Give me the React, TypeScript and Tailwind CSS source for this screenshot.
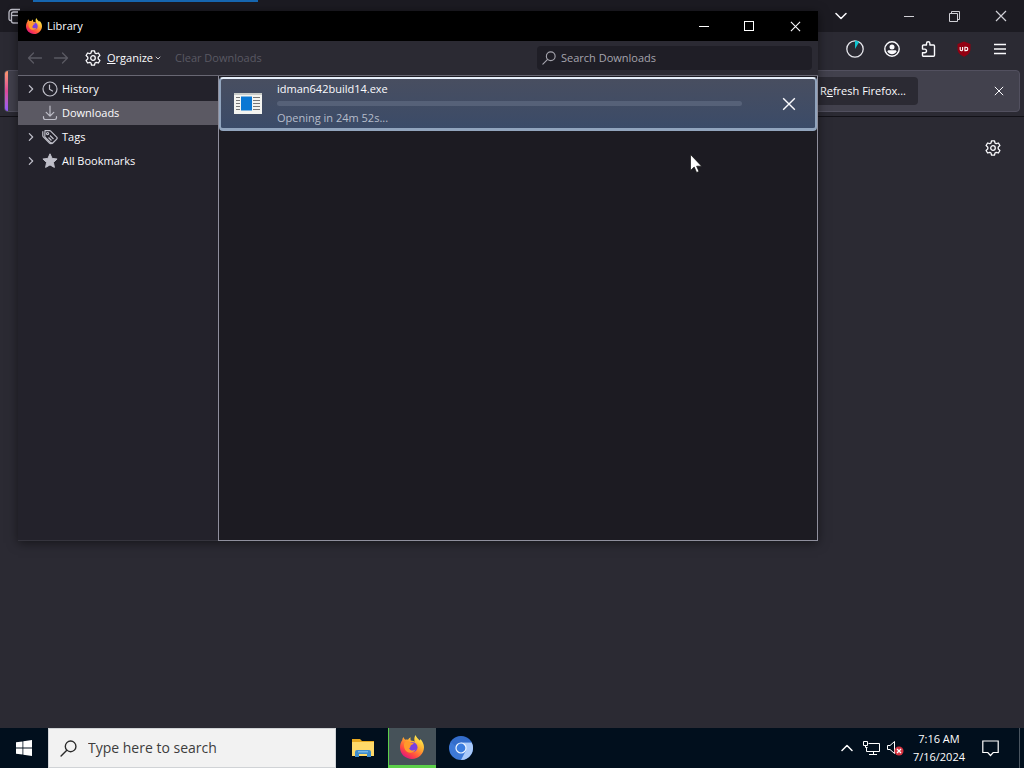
import { useState } from 'react';

const sidebarItems = [
    { label: 'History', icon: ClockIcon, expandable: true },
    { label: 'Downloads', icon: DownloadIcon, expandable: false },
    { label: 'Tags', icon: TagIcon, expandable: true },
    { label: 'All Bookmarks', icon: StarIcon, expandable: true },
];

function ClockIcon() {
    return (
        <svg viewBox="0 0 16 16" className="h-4 w-4" fill="none" stroke="currentColor" strokeLinecap="round">
            <circle cx="8" cy="8" r="7" strokeWidth="1.2" />
            <path d="M7.5 4v4.2l3 1.8" strokeWidth="1.2" />
        </svg>
    );
}

function DownloadIcon() {
    return (
        <svg viewBox="0 0 16 16" className="h-4 w-4" fill="none" stroke="currentColor" strokeWidth="1.2" strokeLinecap="round" strokeLinejoin="round">
            <path d="M8 1v10M4.2 7.4 8 11.2l3.8-3.8M1.5 11.5v1.3a1.7 1.7 0 0 0 1.7 1.7h9.6a1.7 1.7 0 0 0 1.7-1.7v-1.3" />
        </svg>
    );
}

function TagIcon() {
    return (
        <svg viewBox="0 0 16 16" className="h-4 w-4" fill="none" stroke="currentColor" strokeWidth="1.2" strokeLinejoin="round">
            <path d="M.8 2.2v4.6c0 .4.2.8.5 1.1l6.2 6.2c.6.6 1.4.6 2 0l.7-.7" />
            <path d="M3 1.6h4.6c.4 0 .8.2 1.1.5l6 6c.6.6.6 1.4 0 2l-3.9 3.9c-.6.6-1.4.6-2 0L3.3 8.5a1.5 1.5 0 0 1-.5-1.1z" />
            <circle cx="5.6" cy="4.6" r="1.1" />
            <path d="m8 6.5 3.5 3.5M6.5 8.5l3 3" />
        </svg>
    );
}

function StarIcon() {
    return (
        <svg viewBox="0 0 16 16" className="h-4 w-4" fill="currentColor" stroke="currentColor" strokeWidth="1" strokeLinejoin="round">
            <path d="m8 .8 2.1 4.6 5 .6-3.7 3.4 1 5L8 11.9l-4.4 2.5 1-5L.9 6l5-.6z" />
        </svg>
    );
}

function GearIcon() {
    return (
        <svg viewBox="0 0 16 16" className="h-4 w-4" fill="none" stroke="currentColor" strokeWidth="1.3" strokeLinejoin="round">
            <path d="M6.500.8h3l.5 2.200 1.200.7 2.200-.7 1.500 2.500-1.700 1.600v1.800l1.700 1.600-1.500 2.500-2.200-.7-1.200.7-.5 2.200h-3L6 13l-1.200-.7-2.200.7-1.500-2.500 1.700-1.600V7.100L1.100 5.500 2.600 3l2.200.7L6 3z" />
            <circle cx="8" cy="8" r="2.3" />
        </svg>
    );
}

function ArrowIcon({ back = false }: { back?: boolean }) {
    return (
        <svg viewBox="0 0 16 16" className="h-4 w-4" fill="none" stroke="currentColor" strokeWidth="1.3" strokeLinecap="round" strokeLinejoin="round">
            <path d={back ? 'M14.5 8H2M6.5 3l-5 5 5 5' : 'M1.5 8H14M9.5 3l5 5-5 5'} />
        </svg>
    );
}

function ChevronIcon({ d, className }: { d: string; className: string }) {
    return (
        <svg viewBox="0 0 12 12" className={className} fill="none" stroke="currentColor" strokeWidth="1.5" strokeLinecap="round" strokeLinejoin="round">
            <path d={d} />
        </svg>
    );
}

function CrossIcon({ className }: { className: string }) {
    return (
        <svg viewBox="0 0 12 12" className={className} fill="none" stroke="currentColor" strokeWidth="1.2">
            <path d="m1 1 10 10M11 1 1 11" />
        </svg>
    );
}

function SearchIcon({ className }: { className: string }) {
    return (
        <svg viewBox="0 0 16 16" className={className} fill="none" stroke="currentColor" strokeWidth="1.3" strokeLinecap="round">
            <circle cx="10" cy="6" r="5" />
            <path d="M6.4 9.6 1 15" />
        </svg>
    );
}

function FirefoxIcon({ className }: { className: string }) {
    return (
        <svg viewBox="0 0 24 24" className={className}>
            <defs>
                <linearGradient id="fx-body" x1="0.85" y1="0.1" x2="0.25" y2="0.95">
                    <stop offset="0" stopColor="#fff04f" />
                    <stop offset="0.4" stopColor="#ffa42e" />
                    <stop offset="0.75" stopColor="#ff4a3f" />
                    <stop offset="1" stopColor="#e2177c" />
                </linearGradient>
            </defs>
            <path fill="url(#fx-body)" d="M15.5 0c.7 2.3 2.7 3.7 4.2 5.5.5-.4.6-1 .6-1.500 2.300 2.400 3.700 5.200 3.700 8.300C24 18.800 18.600 24 12 24S0 18.900 0 12.500c0-3 .8-5.400 2.200-7.300C2.300 4 2.700 2.800 3.400 2c.4 1.200 1 2 1.800 2.700 1-.3 1.900-.3 2.800 0C8.600 3.500 9.500 2.700 10.600 2.300c-.3 1.200-.2 2.300.2 3.200 2 .2 3 .4 4 1.500-.8-2.500-.6-4.900.7-7z" />
            <circle cx="12.5" cy="12.3" r="5" fill="#7a3fe0" />
            <path fill="#ff9a2b" d="M4.5 7.500c2.300-1.700 4.600-1.400 6.200.2l3 .2c-.4 1.600-2.400 1.800-3 2.600-.7.9.2 2.300-1.600 2.700 1 2.600 4.500 3 6.300 1.300-1 3.800-7.900 4.700-10.300.2-1.200-2.200-1.500-4.800-.6-7.200z" />
        </svg>
    );
}

function BrowserBackdrop() {
    return (
        <div className="flex flex-1 flex-col bg-[#2b2a33] text-[#fbfbfe]">
            <div className="flex h-8 items-center bg-[#1c1b22]">
                <svg viewBox="0 0 16 16" className="ml-2 h-4 w-4 shrink-0" fill="none" stroke="#bfbfc9" strokeWidth="1.3">
                    <path d="M3 12.5h-.5A1.5 1.5 0 0 1 1 11V4.500A3 3 0 0 1 4 1.500h8" />
                    <rect x="3.5" y="4" width="11.5" height="11" rx="2" />
                    <path d="M3.5 7.500H15" />
                </svg>
                <div className="ml-[9px] w-[225px] self-start border-t-2 border-[#1767b0]" />
                <div className="ml-auto flex items-center">
                    <button aria-label="List all tabs" className="mr-[57px]">
                        <ChevronIcon d="m1 3.500 5 5 5-5" className="h-3 w-3" />
                    </button>
                    <button aria-label="Minimize browser" className="mr-[35px] block w-[10px] border-t border-[#d0d0d6]" />
                    <button aria-label="Restore browser" className="mr-[35px]">
                        <svg viewBox="0 0 11 11" className="h-[11px] w-[11px]" fill="none" stroke="#d0d0d6">
                            <path d="M.5 2.500h8v8h-8zM2.500 2.500v-2h8v8h-2" />
                        </svg>
                    </button>
                    <button aria-label="Close browser" className="mr-[17px] text-[#d0d0d6]">
                        <CrossIcon className="h-3 w-3" />
                    </button>
                </div>
            </div>
            <div className="flex h-[34px] items-center justify-end gap-5 pr-4">
                <button aria-label="Download progress">
                    <svg viewBox="0 0 18 18" className="h-[18px] w-[18px]" fill="none">
                        <circle cx="9" cy="9" r="8.200" stroke="#e6e6ec" strokeWidth="1.300" />
                        <path d="M9 .5v8.500l4.200-7A8 8 0 0 0 9 .5z" fill="#12c4d0" />
                    </svg>
                </button>
                <button aria-label="Account">
                    <svg viewBox="0 0 16 16" className="h-4 w-4">
                        <circle cx="8" cy="8" r="7.200" fill="none" stroke="#fbfbfe" strokeWidth="1.400" />
                        <circle cx="8" cy="6" r="2.500" fill="#fbfbfe" />
                        <path d="M3.500 10.500c0-.8.7-1.300 1.500-1.300h6c.8 0 1.500.5 1.500 1.300-1 1.800-2.600 2.700-4.500 2.700s-3.500-.9-4.500-2.700z" fill="#fbfbfe" />
                    </svg>
                </button>
                <button aria-label="Extensions">
                    <svg viewBox="0 0 16 16" className="h-4 w-4" fill="none" stroke="#fbfbfe" strokeWidth="1.400" strokeLinejoin="round">
                        <path d="M6.500 4V2.500a1.700 1.700 0 0 1 3.400 0V4H13.500a1 1 0 0 1 1 1v9.300a1 1 0 0 1-1 1h-10a1 1 0 0 1-1-1v-2.600h2.200a1.800 1.800 0 0 0 0-3.600H2.500V5a1 1 0 0 1 1-1z" />
                    </svg>
                </button>
                <button aria-label="Content blocker">
                    <svg viewBox="0 0 16 16" className="h-4 w-4">
                        <path d="M8 .5 14.500 3v5c0 3.600-2.500 6-6.500 7.700C4 14 1.500 11.600 1.500 8V3z" fill="#920012" />
                        <path d="M4.200 6v2.500a1.200 1.200 0 0 0 2.400 0V6M8.900 6.200v3.400h1.200a1.700 1.700 0 0 0 0-3.400z" fill="none" stroke="#fff" strokeWidth="1.100" />
                    </svg>
                </button>
                <button aria-label="Open menu">
                    <svg viewBox="0 0 16 16" className="h-4 w-4" stroke="#fbfbfe" strokeWidth="1.400">
                        <path d="M2 3.500h12M2 8h12M2 12.500h12" />
                    </svg>
                </button>
            </div>
            <div className="border-b border-[#121117] px-1 pt-1 pb-1">
                <div className="flex h-[42px] items-center overflow-hidden rounded border border-[#52505f] bg-[#42414d] text-[11px]">
                    <div className="h-full w-[3px] bg-linear-to-b from-[#ff9a6b] via-[#e04a9a] to-[#9059ff]" />
                    <button className="ml-auto h-7 rounded bg-[#2b2a33] pr-3 pl-9 text-[#fbfbfe]">
                        R<u>e</u>fresh Firefox...
                    </button>
                    <button aria-label="Dismiss notification" className="mr-[15px] ml-[76px]">
                        <CrossIcon className="h-[10px] w-[10px]" />
                    </button>
                </div>
            </div>
            <div className="flex justify-end px-[23px] py-[23px]">
                <button aria-label="Page settings">
                    <GearIcon />
                </button>
            </div>
        </div>
    );
}

function LibraryWindow() {
    const [selected, setSelected] = useState('Downloads');

    return (
        <section className="absolute top-[11px] left-[18px] flex h-[530px] w-[800px] flex-col bg-[#23222b] text-[11px] text-[#fbfbfe] shadow-[0_2px_10px_rgba(0,0,0,0.5)]">
            <header className="flex h-[30px] shrink-0 items-center bg-black pl-2">
                <FirefoxIcon className="h-4 w-4" />
                <h1 className="ml-[5px]">Library</h1>
                <div className="ml-auto flex items-center">
                    <button aria-label="Minimize" className="mr-[35px] block w-[10px] border-t border-white" />
                    <button aria-label="Maximize" className="mr-9 block h-[10px] w-[10px] border border-white" />
                    <button aria-label="Close" className="mr-[17px]">
                        <CrossIcon className="h-[11px] w-[11px]" />
                    </button>
                </div>
            </header>

            <div className="flex h-[35px] shrink-0 items-center border-b border-[#686773] bg-[#2b2a33] pr-[6px] pl-[9px]">
                <button aria-label="Back" disabled className="text-[#5a5963]">
                    <ArrowIcon back />
                </button>
                <button aria-label="Forward" disabled className="ml-[10px] text-[#5a5963]">
                    <ArrowIcon />
                </button>
                <button className="ml-4 flex items-center">
                    <GearIcon />
                    <span className="ml-[6px]">
                        <u>O</u>rganize
                    </span>
                    <ChevronIcon d="m2 4 4 4 4-4" className="ml-0.5 h-[6px] w-[6px]" />
                </button>
                <button disabled className="ml-[14px] text-[#5a5963]">Clear Downloads</button>
                <label className="ml-auto flex h-6 w-[275px] items-center rounded bg-[#1f1e26] pl-[5px] text-[#a5a4ad]">
                    <SearchIcon className="h-[14px] w-[14px]" />
                    <input
                        type="text"
                        aria-label="Search Downloads"
                        placeholder="Search Downloads"
                        className="ml-[5px] min-w-0 flex-1 bg-transparent outline-none placeholder:text-[#a5a4ad]"
                    />
                </label>
            </div>

            <div className="flex min-h-0 flex-1">
                <nav className="w-[200px] shrink-0 border-b border-[#35343d] pt-px">
                    {sidebarItems.map(({ label, icon: Icon, expandable }) => (
                        <button
                            key={label}
                            onClick={() => setSelected(label)}
                            className={`flex h-6 w-full items-center pl-2 ${selected === label ? 'bg-[#5b5963]' : ''}`}
                        >
                            <span className="w-4 text-[#bfbfc9]">
                                {expandable && <ChevronIcon d="m4 2 4 4-4 4" className="h-[10px] w-[10px]" />}
                            </span>
                            <span className="text-[#bfbfc9]">
                                <Icon />
                            </span>
                            <span className="ml-1">{label}</span>
                        </button>
                    ))}
                </nav>

                <main className="min-w-0 flex-1 border-r border-b border-l border-[#8f8f9d] bg-[#1c1b22]">
                    <div className="mt-px flex h-[54px] items-center rounded border-2 border-b-[3px] border-[#91a4bd] border-t-[#e6effa] bg-linear-to-b from-[#484e60] to-[#3b4b68] pr-[19px] pl-[13px]">
                        <svg viewBox="0 0 28 21" className="h-[21px] w-7 shrink-0">
                            <path fill="#f4f4f0" d="M0 0h28v21H0z" />
                            <path fill="#c9ccc9" d="M0 0h28v2H0z" />
                            <path fill="#0a78d4" d="M7 3.500h11v14H7z" />
                            <path stroke="#777" d="M2 4.500h4M2 7.500h4M2 10.500h4M2 13.500h4M2 16.500h4M19 4.500h7M19 7.500h7M19 10.500h7M19 13.500h7M19 16.500h7" />
                        </svg>
                        <div className="ml-[15px] min-w-0 flex-1">
                            <p className="leading-4">idman642build14.exe</p>
                            <div role="progressbar" aria-label="Download progress" className="my-1 h-[5px] rounded-full bg-[#566178]" />
                            <p className="leading-4 text-[#b6bdcb]">Opening in 24m 52s...</p>
                        </div>
                        <button aria-label="Cancel download" className="ml-10">
                            <CrossIcon className="h-[14px] w-[14px]" />
                        </button>
                    </div>
                </main>
            </div>
        </section>
    );
}

function Taskbar() {
    return (
        <footer className="flex h-10 shrink-0 items-center bg-[#010f1d] text-white">
            <button aria-label="Start" className="flex w-12 justify-center">
                <svg viewBox="0 0 16 16" className="h-4 w-4" fill="#fff">
                    <path d="M0 2.300 6.500 1.400v6.200H0zM7.300 1.300 16 0v7.600H7.300zM0 8.400h6.500v6.200L0 13.700zM7.300 8.400H16V16l-8.700-1.300z" />
                </svg>
            </button>
            <label className="flex h-full w-72 items-center border border-[#d0d3d6] bg-[#f2f2f2] pl-[11px] text-[#2b2b2b]">
                <SearchIcon className="h-[17px] w-[17px]" />
                <input
                    type="text"
                    aria-label="Type here to search"
                    placeholder="Type here to search"
                    className="ml-[11px] min-w-0 flex-1 bg-transparent text-sm outline-none placeholder:text-[#3d3d3d]"
                />
            </label>
            <button aria-label="File Explorer" className="ml-[15px]">
                <svg viewBox="0 0 24 20" className="h-5 w-6">
                    <path fill="#e8a920" d="M1 1h8l2 2h12v5H1z" />
                    <path fill="#ffd969" d="M1 4h22v14H1z" />
                    <path fill="#3f8ccb" d="M4 19v-5a2 2 0 0 1 2-2h12a2 2 0 0 1 2 2v5h-4v-3H8v3z" />
                    <path fill="#76b7e8" d="M7 13h10v1.500H7z" />
                </svg>
            </button>
            <button aria-label="Firefox" className="ml-[13px] flex h-full w-12 items-center justify-center border-b-[3px] border-[#5cd04a] bg-[#465259] shadow-[inset_1px_0_0_#5cd04a]">
                <FirefoxIcon className="h-6 w-6" />
            </button>
            <button aria-label="Chromium" className="ml-[13px]">
                <svg viewBox="0 0 24 24" className="h-6 w-6">
                    <circle cx="12" cy="12" r="12" fill="#3d79d8" />
                    <path fill="#a9c9fa" d="M12 6.500h10.700A12 12 0 0 1 12 24l4.800-9.200z" />
                    <path fill="#2558b5" d="M1.600 6A12 12 0 0 1 22.700 6.500H12a5.500 5.500 0 0 0-5.200 3.800z" opacity=".35" />
                    <circle cx="12" cy="12" r="5.600" fill="#eef5ff" />
                    <circle cx="12" cy="12" r="4.400" fill="#3b7de0" />
                </svg>
            </button>
            <div className="ml-auto flex h-full items-center text-[11px]">
                <button aria-label="Show hidden icons">
                    <ChevronIcon d="m1 8.500 5-5 5 5" className="h-3 w-3" />
                </button>
                <svg viewBox="0 0 17 16" className="ml-[10px] h-4 w-[17px]" fill="none" stroke="#fff">
                    <path d="M5.500 3.500h11v8H3.500v-4M10.500 11.500v3M6 14.500h8M.5 1.500h4v4h-4zM2.500 5.500v2h2" />
                </svg>
                <svg viewBox="0 0 17 16" className="ml-[7px] h-4 w-[17px]" fill="none">
                    <path stroke="#fff" d="M.5 5.500H3l4.500-4v12l-4.500-4H.5z" />
                    <circle cx="12" cy="11" r="4.500" fill="#d63340" />
                    <path stroke="#fff" strokeWidth="1.300" d="m10 9 4 4M14 9l-4 4" />
                </svg>
                <time className="ml-[9px] text-center leading-[18px]">
                    7:16 AM
                    <br />
                    7/16/2024
                </time>
                <button aria-label="Notifications" className="ml-[17px]">
                    <svg viewBox="0 0 17 17" className="h-[17px] w-[17px]" fill="none" stroke="#fff" strokeWidth="1.200">
                        <path d="M.8 1h15.400v11.500h-5L8.500 15.500 5.800 12.500h-5z" />
                    </svg>
                </button>
                <button aria-label="Show desktop" className="ml-5 h-full w-[5px] border-l border-[#4a5560]" />
            </div>
        </footer>
    );
}

export default function App() {
    return (
        <div className="relative flex min-h-screen flex-col overflow-hidden font-['Open_Sans','Noto_Sans',sans-serif]">
            <BrowserBackdrop />
            <LibraryWindow />
            <Taskbar />
            <svg viewBox="0 0 12 19" className="pointer-events-none absolute top-[154px] left-[690px] h-[19px] w-3">
                <path d="M.5.5v16l3.700-3.500 2.400 5.500 2.400-1-2.400-5.300h5z" fill="#fff" stroke="#111" strokeWidth=".7" />
            </svg>
        </div>
    );
}
